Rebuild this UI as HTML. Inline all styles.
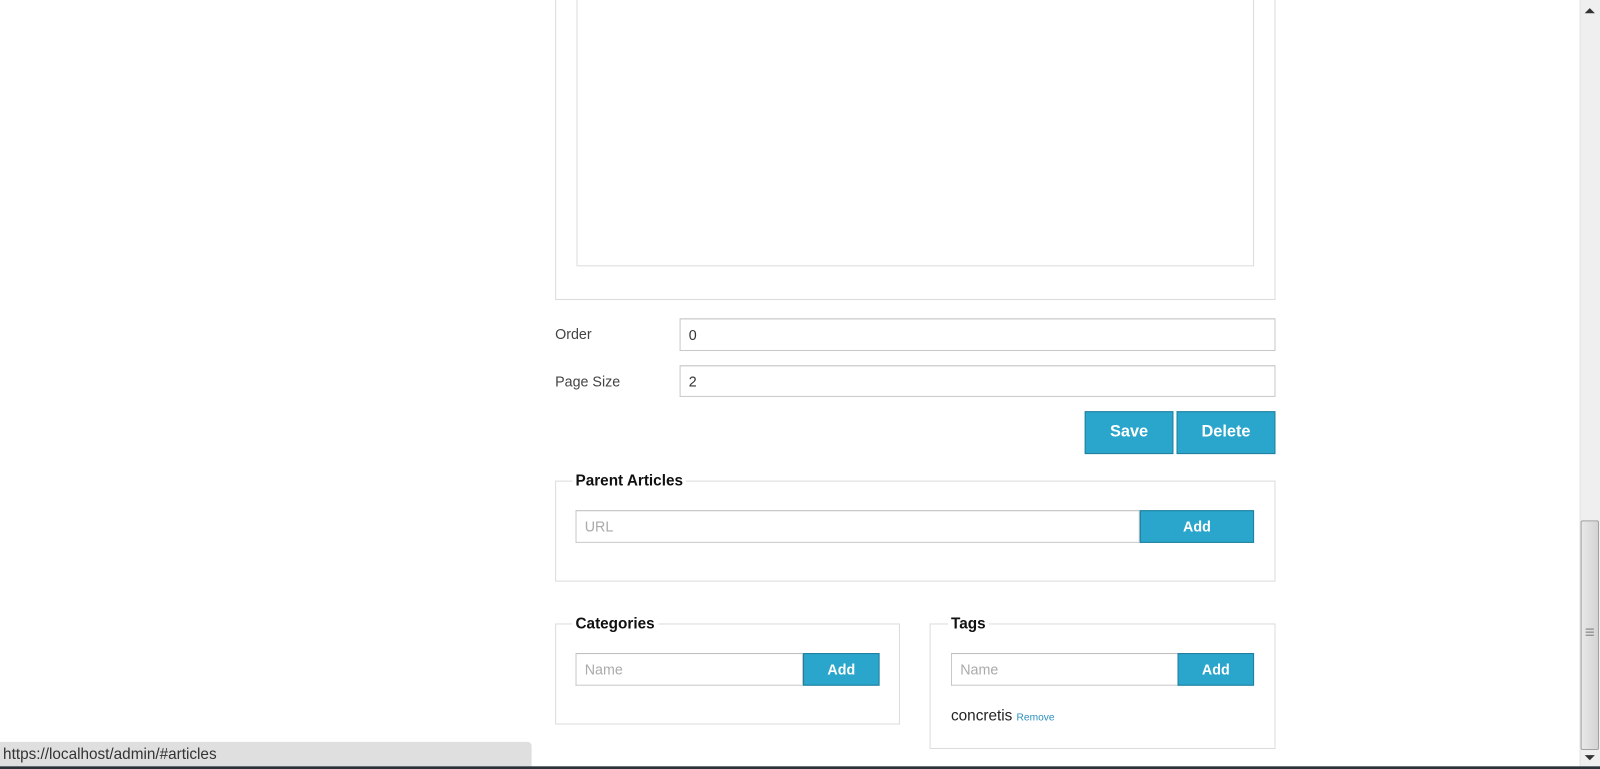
<!DOCTYPE html>
<html><head><style>
body{margin:0;width:1600px;height:768px;position:relative;overflow:hidden;background:#fff;font-family:"Liberation Sans",Arial,sans-serif;}
#w{position:absolute;left:0;top:0;width:1568px;height:753px;transform:scale(1.0204);transform-origin:0 0;}
.a{position:absolute;box-sizing:border-box;}
.box{border:1px solid #dcdcdc;}
.inp{border:1px solid #c8c8c8;border-top-color:#bdbdbd;background:#fff;font-size:14px;color:#333;padding-left:8px;display:flex;align-items:center;}
.ph{color:#aaa;}
.btn{background:#2aa5cb;border:1px solid #1f7e9d;color:#fff;font-weight:bold;display:flex;align-items:center;justify-content:center;}
.lg{background:#fff;font-weight:bold;font-size:15px;color:#111;padding:0 3px;line-height:18px;}
.lbl{font-size:14px;color:#444;}
</style></head><body><div id="w">
<div class="a box" style="left:544px;top:-5px;width:706px;height:299px;"></div>
<div class="a box" style="left:565px;top:-5px;width:664px;height:266px;"></div>

<div class="a lbl" style="left:544px;top:319px;">Order</div>
<div class="a inp" style="left:666px;top:312px;width:584px;height:32px;">0</div>
<div class="a lbl" style="left:544px;top:366px;">Page Size</div>
<div class="a inp" style="left:666px;top:358px;width:584px;height:31px;">2</div>

<div class="a btn" style="left:1063px;top:403px;width:87px;height:42px;font-size:16px;">Save</div>
<div class="a btn" style="left:1153px;top:403px;width:97px;height:42px;font-size:16px;">Delete</div>

<div class="a box" style="left:544px;top:471px;width:706px;height:99px;"></div>
<div class="a lg" style="left:561px;top:463px;">Parent Articles</div>
<div class="a inp ph" style="left:564px;top:500px;width:553px;height:32px;">URL</div>
<div class="a btn" style="left:1117px;top:500px;width:112px;height:32px;font-size:14px;">Add</div>

<div class="a box" style="left:544px;top:611px;width:338px;height:99px;"></div>
<div class="a lg" style="left:561px;top:603px;">Categories</div>
<div class="a inp ph" style="left:564px;top:640px;width:223px;height:32px;">Name</div>
<div class="a btn" style="left:787px;top:640px;width:75px;height:32px;font-size:14px;">Add</div>

<div class="a box" style="left:911px;top:611px;width:339px;height:123px;"></div>
<div class="a lg" style="left:929px;top:603px;">Tags</div>
<div class="a inp ph" style="left:932px;top:640px;width:223px;height:32px;">Name</div>
<div class="a btn" style="left:1154px;top:640px;width:75px;height:32px;font-size:14px;">Add</div>
<div class="a" style="left:932px;top:693px;font-size:15px;color:#222;">concretis <span style="font-size:10px;color:#2a8fbf;">Remove</span></div>

<div class="a" style="left:1548px;top:0;width:20px;height:751px;background:#efefef;border-left:1px solid #e4e4e4;"></div>
<div class="a" style="left:1553px;top:8px;width:0;height:0;border-left:5px solid transparent;border-right:5px solid transparent;border-bottom:5px solid #333;"></div>
<div class="a" style="left:1549px;top:510px;width:18px;height:225px;background:linear-gradient(90deg,#e8e8e8,#d4d4d4);border:1px solid #a0a0a0;border-radius:2px;"></div>
<div class="a" style="left:1554px;top:616px;width:8px;height:7px;border-top:1px solid #777;border-bottom:1px solid #777;"></div>
<div class="a" style="left:1554px;top:619px;width:8px;height:1px;background:#777;"></div>
<div class="a" style="left:1553px;top:740px;width:0;height:0;border-left:5px solid transparent;border-right:5px solid transparent;border-top:5px solid #333;"></div>

<div class="a" style="left:0;top:727px;width:521px;height:24px;background:#dfdfdf;border-radius:0 4px 0 0;font-size:15px;color:#333;padding:4px 0 0 3px;">https://localhost/admin/#articles</div>
<div class="a" style="left:0;top:751px;width:1568px;height:3px;background:#2b3238;"></div>
</div></body></html>
